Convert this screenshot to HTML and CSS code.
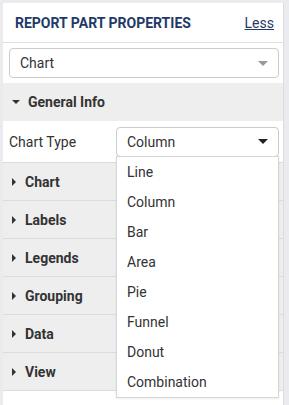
FILE: index.html
```html
<!DOCTYPE html>
<html lang="en">
<head>
  <meta charset="UTF-8" />
  <title>Report Part Properties</title>
  <link rel="stylesheet" href="styles.css">
</head>
<body>
  <div class="panel">
    <div class="panel-head">
      <span class="panel-title">REPORT PART PROPERTIES</span>
      <a class="less-link" href="#">Less</a>
    </div>

    <div class="type-row">
      <div class="select">
        <span>Chart</span>
        <span class="arrow light"></span>
      </div>
    </div>

    <!-- General Info (open) -->
    <div class="section">
      <div class="section-head open"><span class="caret-down"></span>General Info</div>
      <div class="section-body">
        <label class="field-label">Chart Type</label>
        <div class="select small">
          <span>Column</span>
          <span class="arrow"></span>
          <ul class="options">
            <li>Line</li>
            <li>Column</li>
            <li>Bar</li>
            <li>Area</li>
            <li>Pie</li>
            <li>Funnel</li>
            <li>Donut</li>
            <li>Combination</li>
          </ul>
        </div>
      </div>
    </div>

    <div class="section"><div class="section-head"><span class="caret-right"></span>Chart</div></div>
    <div class="section"><div class="section-head"><span class="caret-right"></span>Labels</div></div>
    <div class="section"><div class="section-head"><span class="caret-right"></span>Legends</div></div>
    <div class="section"><div class="section-head"><span class="caret-right"></span>Grouping</div></div>
    <div class="section"><div class="section-head"><span class="caret-right"></span>Data</div></div>
    <div class="section"><div class="section-head"><span class="caret-right"></span>View</div></div>
  </div>
</body>
</html>
```

FILE: styles.css
```css
body {
  margin: 0;
  padding: 3px 0 0 3px;
  background: #e9ebee;
  font-family: Roboto, "Liberation Sans", sans-serif;
  font-size: 14px;
  color: #333;
  height: 402px;
  overflow: hidden;
}

.panel {
  width: 280px;
  height: 402px;
  background: #fff;
  border-right: 1px solid #dcdcdc;
}

.panel-head {
  height: 39px;
  border-bottom: 1px solid #e0e0e0;
  display: flex;
  align-items: center;
  justify-content: space-between;
  padding: 0 9px 0 12px;
}

.panel-title {
  font-weight: bold;
  font-size: 14px;
  color: #1f3a68;
}

.less-link {
  color: #1f3a68;
  font-size: 14px;
}

.type-row {
  padding: 5px 4px 5px 6px;
}

.select {
  position: relative;
  height: 28px;
  border: 1px solid #ccc;
  border-radius: 4px;
  display: flex;
  align-items: center;
  justify-content: space-between;
  padding: 0 10px;
  background: #fff;
}

.arrow {
  width: 0;
  height: 0;
  border-left: 5px solid transparent;
  border-right: 5px solid transparent;
  border-top: 5px solid #222;
}

.arrow.light {
  border-top-color: #999;
}

.section {
  border-bottom: 1px solid #dcdcdc;
}

.section-head {
  height: 37px;
  background: #eeeeee;
  display: flex;
  align-items: center;
  padding-left: 9px;
  font-weight: bold;
  color: #333;
}

.section-head.open {
  height: 38px;
}

.caret-down {
  width: 0;
  height: 0;
  border-left: 4px solid transparent;
  border-right: 4px solid transparent;
  border-top: 4px solid #333;
  margin-right: 8px;
}

.caret-right {
  width: 0;
  height: 0;
  border-top: 4px solid transparent;
  border-bottom: 4px solid transparent;
  border-left: 4px solid #333;
  margin-right: 9px;
}

.section-body {
  height: 41px;
  display: flex;
  align-items: center;
  justify-content: space-between;
  padding: 0 4px 0 6px;
}

.field-label {
  color: #333;
}

.select.small {
  width: 141px;
}

.options {
  position: absolute;
  left: -1px;
  top: 28px;
  width: 161px;
  margin: 0;
  padding: 0;
  list-style: none;
  background: #fff;
  border: 1px solid #d6d6d6;
  box-shadow: 0 1px 2px rgba(0, 0, 0, 0.08);
  z-index: 2;
}

.options li {
  height: 30px;
  line-height: 30px;
  padding-left: 10px;
}
```
